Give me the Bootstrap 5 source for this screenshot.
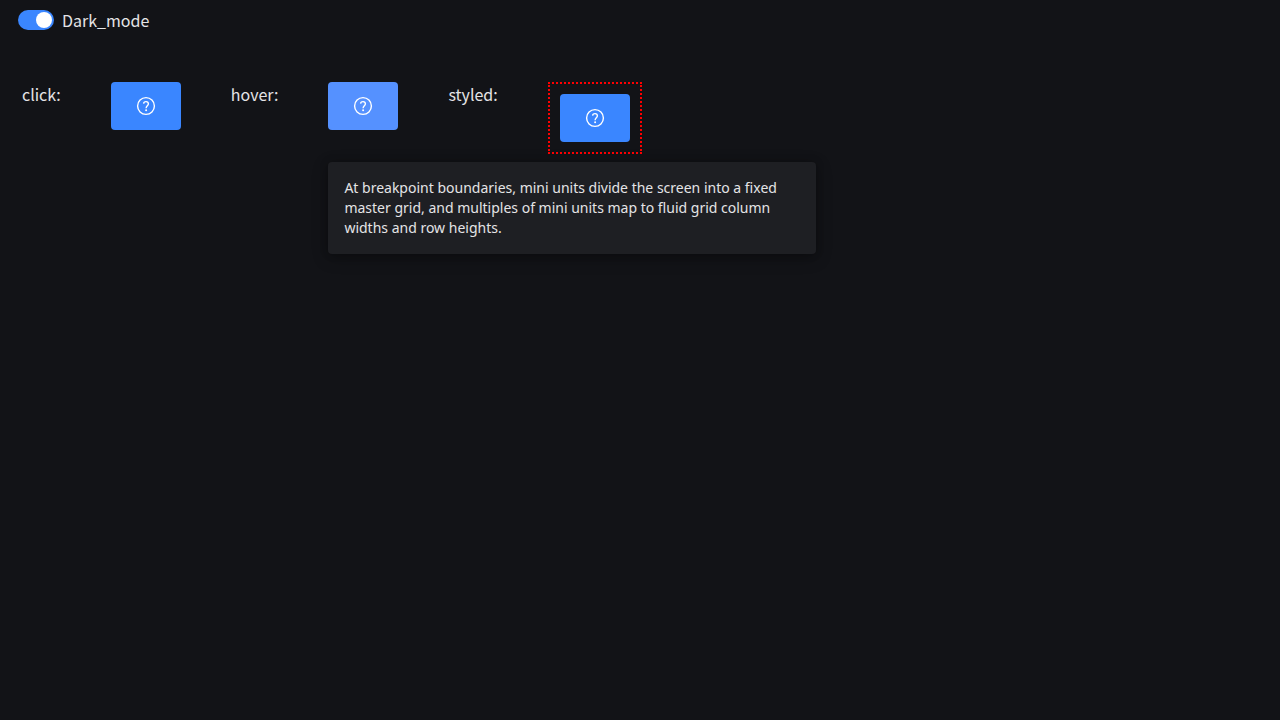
<!DOCTYPE html>
<html lang="en" data-bs-theme="dark">
<head>
<meta charset="utf-8">
<meta name="viewport" content="width=device-width, initial-scale=1">
<title>Help tooltip</title>
<link rel="stylesheet" href="https://cdn.jsdelivr.net/npm/bootstrap@5.3.0/dist/css/bootstrap.min.css">
<style>
  body {
    background: #121317;
    color: #e4e4e6;
    font-family: "Noto Sans CJK SC", "Noto Sans", sans-serif;
    font-size: 16px;
    line-height: 24px;
  }
  .mode-bar { padding: 8px 18px; }
  .form-switch.mode-switch { min-height: 24px; padding: 0; }
  .form-switch .form-check-input.mode-input {
    width: 36px;
    height: 20px;
    margin: 0;
    border: 0;
    background-color: #3a86ff;
    background-image: url("data:image/svg+xml,%3csvg xmlns='http://www.w3.org/2000/svg' viewBox='-10 -10 20 20'%3e%3ccircle r='8' fill='%23fff'/%3e%3c/svg%3e");
  }
  .demo-row { padding: 42px 22px; gap: 50px; }
  .btn-help {
    --bs-btn-bg: #3a86ff;
    --bs-btn-color: #fff;
    --bs-btn-hover-bg: #5591ff;
    --bs-btn-hover-color: #fff;
    --bs-btn-active-bg: #5591ff;
    width: 70px;
    height: 48px;
    padding: 0;
    border: 0;
    border-radius: 4px;
  }
  .btn-help.is-hovered { --bs-btn-bg: #5591ff; }
  .styled-box { padding: 10px; border: 2px dotted #f00; }
  .help-tip {
    top: 80px;
    left: 0;
    width: 488px;
    padding: 16px;
    border-radius: 4px;
    background: #1e1f23;
    box-shadow: 0 4px 16px rgba(0, 0, 0, .3), 0 0 8px rgba(0, 0, 0, .2);
    font-family: "Noto Sans", sans-serif;
    font-size: 14px;
    line-height: 20px;
  }
</style>
</head>
<body class="min-vh-100">
<svg class="d-none" aria-hidden="true">
  <symbol id="help" viewBox="0 0 20 20">
    <circle cx="10" cy="10" r="8.4" fill="none" stroke="currentColor" stroke-width="1.4"/>
    <path d="M7.6 7.6C7.7 6.3 8.6 5.6 10 5.6s2.4.9 2.4 2.2c0 1.9-2.3 2.1-2.3 4.4" fill="none" stroke="currentColor" stroke-width="1.4"/>
    <circle cx="10.1" cy="14.2" r="1" fill="currentColor"/>
  </symbol>
</svg>
<header class="mode-bar">
  <div class="form-check form-switch mode-switch d-flex align-items-center gap-2 mb-0">
    <input class="form-check-input mode-input float-none" type="checkbox" role="switch" id="darkMode" checked>
    <label class="form-check-label" for="darkMode">Dark_mode</label>
  </div>
</header>
<main class="demo-row d-flex flex-wrap align-items-start">
  <span>click:</span>
  <button type="button" class="btn btn-help d-flex align-items-center justify-content-center" aria-label="Help on click"><svg width="20" height="20"><use href="#help"/></svg></button>
  <span>hover:</span>
  <div class="position-relative">
    <button type="button" class="btn btn-help is-hovered d-flex align-items-center justify-content-center" aria-label="Help on hover" aria-describedby="tip"><svg width="20" height="20"><use href="#help"/></svg></button>
    <div class="help-tip position-absolute" role="tooltip" id="tip">At breakpoint boundaries, mini units divide the screen into a fixed master grid, and multiples of mini units map to fluid grid column widths and row heights.</div>
  </div>
  <span>styled:</span>
  <div class="styled-box">
    <button type="button" class="btn btn-help d-flex align-items-center justify-content-center" aria-label="Styled help"><svg width="20" height="20"><use href="#help"/></svg></button>
  </div>
</main>
<script src="https://cdn.jsdelivr.net/npm/bootstrap@5.3.0/dist/js/bootstrap.bundle.min.js"></script>
</body>
</html>
